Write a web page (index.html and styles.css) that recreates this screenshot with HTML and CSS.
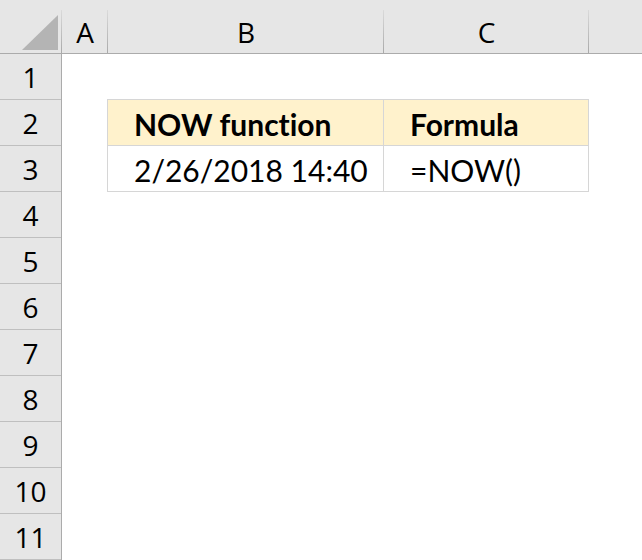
FILE: index.html
```html
<!DOCTYPE html>
<html>
<head>
<meta charset="utf-8">
<link rel="stylesheet" href="styles.css">
</head>
<body>
<div class="sheet">
  <div class="colhead">
    <div class="corner"><svg class="tri" width="62" height="53" viewBox="0 0 62 53"><polygon points="58,15 58,50 22,50" fill="#b4b4b4"/></svg></div>
    <div class="ch col-a">A</div>
    <div class="ch col-b">B</div>
    <div class="ch col-c">C</div>
    <div class="ch col-rest"></div>
  </div>
  <div class="body">
    <div class="rowheads">
      <div class="rh first">1</div>
      <div class="rh">2</div>
      <div class="rh">3</div>
      <div class="rh">4</div>
      <div class="rh">5</div>
      <div class="rh">6</div>
      <div class="rh">7</div>
      <div class="rh">8</div>
      <div class="rh">9</div>
      <div class="rh">10</div>
      <div class="rh last">11</div>
    </div>
    <div class="canvas">
      <div class="table">
        <div class="cell head">NOW function</div>
        <div class="cell head">Formula</div>
        <div class="cell">2/26/2018 14:40</div>
        <div class="cell">=NOW()</div>
      </div>
    </div>
  </div>
</div>
</body>
</html>
```

FILE: styles.css
```css
html, body {
  margin: 0;
  padding: 0;
  background: #ffffff;
}
body {
  width: 642px;
  height: 560px;
  overflow: hidden;
}
.sheet {
  width: 642px;
  height: 560px;
  display: flex;
  flex-direction: column;
}
.colhead {
  display: flex;
  height: 53px;
  background: #e6e6e6;
  border-bottom: 1px solid #ababab;
  flex: none;
}
.corner, .ch {
  height: 53px;
  box-sizing: border-box;
  background-image: linear-gradient(to bottom, #dadada, #a9a9a9);
  background-size: 1px 43px;
  background-position: right bottom;
  background-repeat: no-repeat;
}
.corner {
  width: 62px;
  flex: none;
}
.tri {
  display: block;
}
.ch {
  display: flex;
  align-items: center;
  justify-content: center;
  padding-top: 11px;
  font-family: "Open Sans", "Noto Sans", sans-serif;
  font-size: 28px;
  color: #000;
  flex: none;
}
.col-a { width: 46px; }
.col-b { width: 276px; }
.col-c { width: 205px; }
.col-rest { flex: 1; background-image: none; }
.body {
  display: flex;
  flex: 1;
}
.rowheads {
  width: 61px;
  border-right: 1px solid #ababab;
  background: #e6e6e6;
  display: flex;
  flex-direction: column;
  flex: none;
}
.rh {
  height: 46px;
  box-sizing: border-box;
  border-top: 1px solid #bfbfbf;
  display: flex;
  align-items: center;
  justify-content: center;
  font-family: "Open Sans", "Noto Sans", sans-serif;
  font-size: 28px;
  color: #000;
}
.rh.first {
  height: 45px;
  border-top: none;
}
.rh.last {
  height: 47px;
  border-bottom: 1px solid #bfbfbf;
}
.canvas {
  flex: 1;
  padding-top: 45px;
  padding-left: 45px;
}
.table {
  display: grid;
  grid-template-columns: 275px 204px;
  grid-template-rows: 45px 45px;
  gap: 1px;
  padding: 1px;
  background: #d6d6d6;
  width: max-content;
}
.cell {
  background: #ffffff;
  display: flex;
  align-items: center;
  padding-left: 26px;
  padding-top: 2px;
  box-sizing: border-box;
  font-family: Lato, "Open Sans", sans-serif;
  font-size: 30px;
  font-variant-ligatures: none;
  color: #000;
  white-space: nowrap;
}
.cell.head {
  background: #fff2cc;
  font-weight: 700;
}
```
